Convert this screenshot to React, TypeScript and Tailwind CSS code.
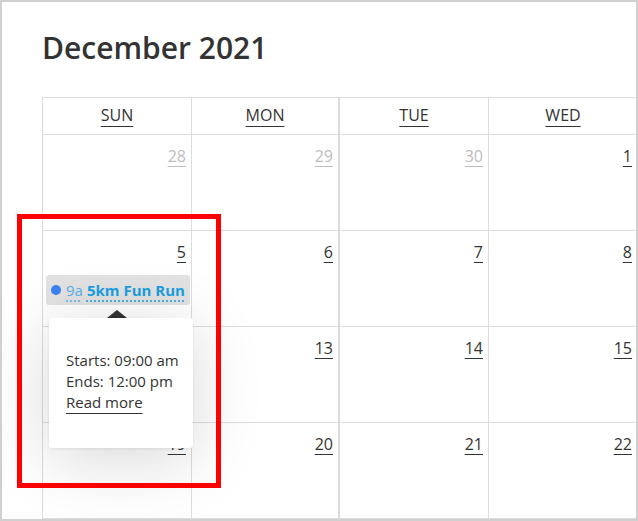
import React from "react";

const COLS = ["SUN", "MON", "TUE", "WED", "THU", "FRI", "SAT"];
const COL_W = ["w-[149px]", "w-[148px]", "w-[149px]", "w-[149px]", "w-[149px]", "w-[149px]", "w-[149px]"];

const WEEKS: { n: number; muted?: boolean }[][] = [
  [{ n: 28, muted: true }, { n: 29, muted: true }, { n: 30, muted: true }, { n: 1 }, { n: 2 }, { n: 3 }, { n: 4 }],
  [{ n: 5 }, { n: 6 }, { n: 7 }, { n: 8 }, { n: 9 }, { n: 10 }, { n: 11 }],
  [{ n: 12 }, { n: 13 }, { n: 14 }, { n: 15 }, { n: 16 }, { n: 17 }, { n: 18 }],
  [{ n: 19 }, { n: 20 }, { n: 21 }, { n: 22 }, { n: 23 }, { n: 24 }, { n: 25 }],
];

function EventPill() {
  return (
    <div className="ml-[3px] mr-[1px] mt-[11px] flex h-[30px] items-center rounded-[3px] bg-[#e2e2e2] pl-[5px] text-[15px] leading-[20px] whitespace-nowrap">
      <span className="mr-[5px] h-[10px] w-[10px] shrink-0 rounded-full bg-[#3f82f2]" />
      <span className="text-[#5aaee6] underline decoration-dotted underline-offset-[5px]">9a</span>
      <span className="ml-[4px] font-bold text-[#1a9fe2] underline decoration-dotted underline-offset-[5px]">
        5km Fun Run
      </span>
    </div>
  );
}

export default function App() {
  return (
    <div className="relative h-[521px] w-[638px] overflow-hidden border-2 border-[#d0d0d0] bg-white font-['Open_Sans',sans-serif] text-[#333]">
      <div className="pl-[40px]">
        <h1 className="mt-[26px] h-[40px] text-[30px] font-semibold leading-[40px] text-[#333]">December 2021</h1>

        <div className="mt-[29px] w-max border-l border-t border-[#dcdcdc]">
          {/* weekday header */}
          <div className="flex">
            {COLS.map((c, i) => (
              <div
                key={c}
                className={`${COL_W[i]} h-[37px] border-b border-r ${i === 1 ? "border-r-2" : ""} border-[#dcdcdc] pt-[5px] text-center text-[16px] leading-[24px]`}
              >
                <span className="underline underline-offset-[5px]">{c}</span>
              </div>
            ))}
          </div>

          {WEEKS.map((week, r) => (
            <div key={r} className="flex">
              {week.map((d, i) => (
                <div
                  key={i}
                  className={`${COL_W[i]} h-[96px] border-b border-r ${i === 1 ? "border-r-2" : ""} border-[#dcdcdc]`}
                >
                  <div className="pt-[9px] pr-[5px] text-right text-[16px] leading-[24px]">
                    <span className={`underline underline-offset-4 ${d.muted ? "text-[#bdbdbd]" : "text-[#333]"}`}>
                      {d.n}
                    </span>
                  </div>
                  {r === 1 && i === 0 && <EventPill />}
                </div>
              ))}
            </div>
          ))}
        </div>
      </div>

      {/* tooltip */}
      <div className="absolute left-[105px] top-[308px] h-0 w-0 border-x-[10px] border-b-[8px] border-x-transparent border-b-[#333]" />
      <div className="absolute left-[47px] top-[316px] h-[130px] w-[144px] rounded-[3px] bg-white pl-[17px] pt-[32px] text-[15px] leading-[21px] text-[#333] shadow-[0_10px_70px_rgba(0,0,0,0.16),0_1px_3px_rgba(0,0,0,0.08)]">
        <p>Starts: 09:00 am</p>
        <p>Ends: 12:00 pm</p>
        <a className="underline underline-offset-[5px]">Read more</a>
      </div>

      {/* annotation */}
      <div className="pointer-events-none absolute left-[15px] top-[212px] h-[274px] w-[204px] border-[5px] border-[#ff0000]" />
    </div>
  );
}
